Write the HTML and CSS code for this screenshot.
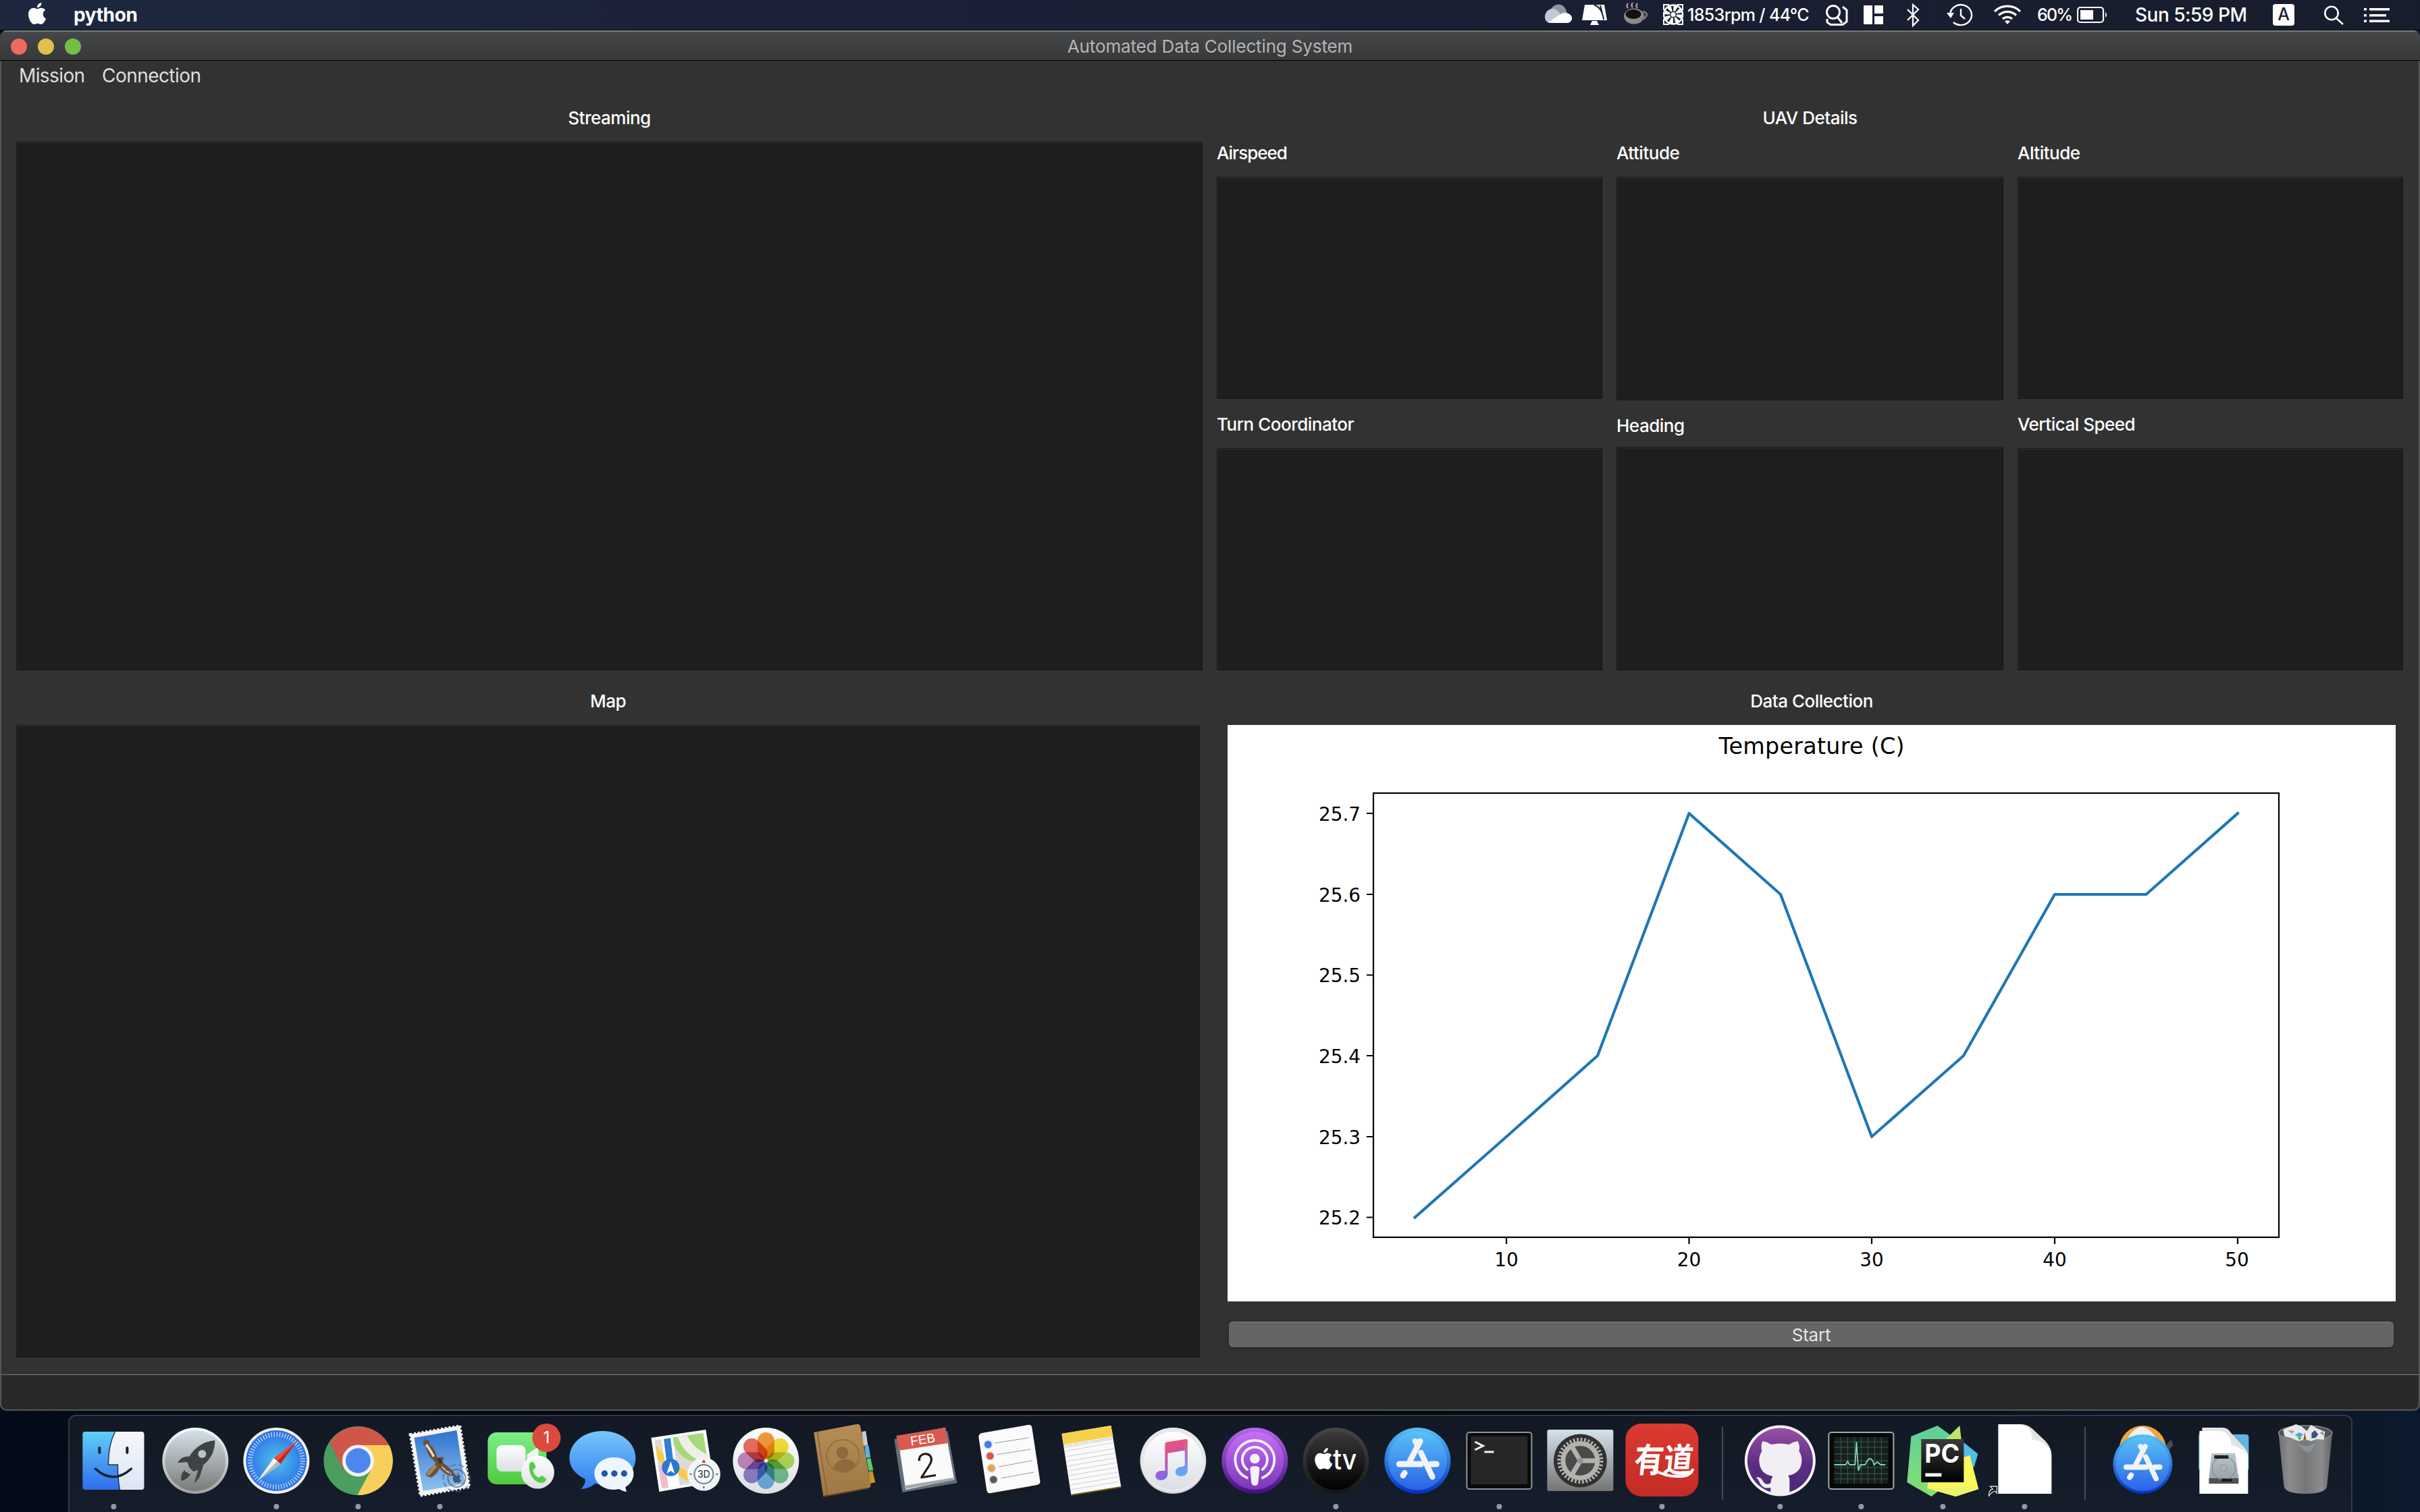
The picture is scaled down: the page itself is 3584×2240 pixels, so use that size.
FILE: index.html
```html
<!DOCTYPE html>
<html lang="en">
<head>
<meta charset="utf-8">
<title>Automated Data Collecting System</title>
<link rel="stylesheet" href="styles.css">
</head>
<body>
<svg class="defs" width="0" height="0" aria-hidden="true">
  <defs>
    <path id="apple" d="M12.152 6.896c-.948 0-2.415-1.078-3.96-1.04-2.04.027-3.91 1.183-4.961 3.014-2.117 3.675-.546 9.103 1.519 12.09 1.013 1.454 2.208 3.09 3.792 3.039 1.52-.065 2.09-.987 3.935-.987 1.831 0 2.35.987 3.96.948 1.637-.026 2.676-1.48 3.676-2.948 1.156-1.688 1.636-3.325 1.662-3.415-.039-.013-3.182-1.221-3.22-4.857-.026-3.04 2.48-4.494 2.597-4.559-1.429-2.09-3.623-2.324-4.39-2.376-2-.156-3.675 1.09-4.61 1.09zM15.53 3.83c.843-1.012 1.4-2.427 1.245-3.83-1.207.052-2.662.805-3.532 1.818-.78.896-1.454 2.338-1.273 3.714 1.338.104 2.715-.688 3.559-1.701"/>
    <linearGradient id="gFinder" x2="0" y2="1"><stop stop-color="#5fd0f8"/><stop offset="1" stop-color="#2f6cec"/></linearGradient>
    <linearGradient id="gFace" x2="0" y2="1"><stop stop-color="#f6f6f8"/><stop offset="1" stop-color="#dce6f4"/></linearGradient>
    <linearGradient id="gLaunch" x2="0" y2="1"><stop stop-color="#d3e1e7"/><stop offset="1" stop-color="#7b7a79"/></linearGradient>
    <linearGradient id="gRing" x2="0" y2="1"><stop stop-color="#f2fbff"/><stop offset="1" stop-color="#a2a2a2"/></linearGradient>
    <radialGradient id="gSafari"><stop stop-color="#52c2ea"/><stop offset="1" stop-color="#2a6fe6"/></radialGradient>
    <linearGradient id="gSky" x2="0" y2="1"><stop stop-color="#2f73cf"/><stop offset="1" stop-color="#8fc2ee"/></linearGradient>
    <linearGradient id="gGreen" x2="0" y2="1"><stop stop-color="#7cee8a"/><stop offset="1" stop-color="#4fcb3a"/></linearGradient>
    <linearGradient id="gMsg" x2="0" y2="1"><stop stop-color="#77c6f8"/><stop offset="1" stop-color="#2f7df4"/></linearGradient>
    <linearGradient id="gWhite" x2="0" y2="1"><stop stop-color="#ffffff"/><stop offset="1" stop-color="#dcdfe2"/></linearGradient>
    <linearGradient id="gBook" x2="0" y2="1"><stop stop-color="#b68d55"/><stop offset="1" stop-color="#9f7744"/></linearGradient>
    <linearGradient id="gNote" x1="0" y1="0" x2="0.3" y2="1"><stop stop-color="#f35d68"/><stop offset=".35" stop-color="#e0508c"/><stop offset="1" stop-color="#7a6bf2"/></linearGradient>
    <linearGradient id="gNote2" x2="0" y2="1"><stop stop-color="#ee5f6c"/><stop offset=".5" stop-color="#9a7ce0"/><stop offset="1" stop-color="#55b2f6"/></linearGradient>
    <linearGradient id="gPod" x2="0" y2="1"><stop stop-color="#c571f6"/><stop offset="1" stop-color="#7c35ba"/></linearGradient>
    <linearGradient id="gPodR" x2="0" y2="1"><stop stop-color="#b468ea"/><stop offset="1" stop-color="#431080"/></linearGradient>
    <linearGradient id="gTv" x2="0" y2="1"><stop stop-color="#3a3a3a"/><stop offset="1" stop-color="#000"/></linearGradient>
    <linearGradient id="gTvR" x2="0" y2="1"><stop stop-color="#464646"/><stop offset="1" stop-color="#161616"/></linearGradient>
    <linearGradient id="gStore" x2="0" y2="1"><stop stop-color="#58c2f8"/><stop offset="1" stop-color="#2a62e6"/></linearGradient>
    <linearGradient id="gStoreR" x2="0" y2="1"><stop stop-color="#58c0f6"/><stop offset="1" stop-color="#0432c0"/></linearGradient>
    <linearGradient id="gPref" x2="0" y2="1"><stop stop-color="#d4e2ec"/><stop offset="1" stop-color="#767472"/></linearGradient>
    <linearGradient id="gYd" x2="0" y2="1"><stop stop-color="#dc3a32"/><stop offset="1" stop-color="#c22c24"/></linearGradient>
    <linearGradient id="gGit" x2="0" y2="1"><stop stop-color="#9a50a8"/><stop offset=".55" stop-color="#5b2d83"/><stop offset="1" stop-color="#4a2a78"/></linearGradient>
    <linearGradient id="gPyG" x2="0" y2="1"><stop stop-color="#5ccf9a"/><stop offset="1" stop-color="#86e070"/></linearGradient>
    <linearGradient id="gDark" x2="0" y2="1"><stop stop-color="#3a3a3a"/><stop offset="1" stop-color="#000"/></linearGradient>
    <linearGradient id="gFold" x1="0" y1="1" x2="1" y2="0"><stop stop-color="#fff"/><stop offset="1" stop-color="#c9c9c9"/></linearGradient>
    <linearGradient id="gTrash" x2="1" y2="0"><stop stop-color="#6e7072"/><stop offset=".2" stop-color="#8b8d8f"/><stop offset=".5" stop-color="#747678"/><stop offset=".8" stop-color="#8a8c8e"/><stop offset="1" stop-color="#606264"/></linearGradient>
    <linearGradient id="gHdd" x2="0" y2="1"><stop stop-color="#b9c6cc"/><stop offset="1" stop-color="#9aa5aa"/></linearGradient>
    <g id="storeA" stroke-linecap="round" fill="none" stroke="#f1f3f7">
      <path stroke-width="9" d="M33 75H65"/><path stroke-width="9" d="M80 75H88"/>
      <path stroke-width="8.5" d="M64 41L47 74"/><path stroke-width="8.5" d="M56.500 41L59.500 46"/><path stroke-width="8.500" d="M65 58L82 94"/>
      <path stroke-width="8.500" d="M41 88L38.500 92"/>
    </g>
  </defs>
</svg>

<header class="menubar">
  <svg class="apple" viewBox="0 0 24 24"><use href="#apple"/></svg>
  <span class="app-name">python</span>
  <div class="status">
    <svg width="55" height="45" viewBox="2288 0 55 45"><path d="M2296 20a12 12 0 0 1 23-6l3 8-10 8z" fill="#8f94a8"/><path d="M2288 25c0-7 5-12 11-12 7 0 10 5 12 9l-15 12c-5 0-8-4-8-9z" fill="#c3c7d6"/><path d="M2293 33l18-12c9-5 17 1 17 6 0 4-3 7-7 7h-24z" fill="#fff"/></svg>
    <svg width="60" height="45" viewBox="2343 0 60 45"><path d="M2347 7h29l4 23h-37z" fill="#fff"/><path d="M2358 31h7l3 6h-13z" fill="#fff"/><path d="M2361 7c7 3 12 8 14 22M2370 8l3 12" stroke="#1b2032" stroke-width="2" fill="none"/></svg>
    <svg width="60" height="45" viewBox="2403 0 60 45"><ellipse cx="2420" cy="24" rx="15" ry="11.500" fill="#8b8b88"/><ellipse cx="2419" cy="21" rx="11.500" ry="7" fill="#16110e"/><path d="M2433 17q8 2 5 7t-8 4" stroke="#77777a" stroke-width="3" fill="none"/><path d="M2411 12q-3-3 0-7M2418 11q-3-3 0-7M2425 12q-3-3 0-7" stroke="#96969a" stroke-width="2.500" fill="none"/></svg>
    <svg width="36" height="45" viewBox="2463 0 36 45"><path d="M2464 15V7h8M2484 7h8v8M2492 28v8h-8M2472 36h-8v-8" fill="none" stroke="#fff" stroke-width="2"/><circle cx="2478" cy="21.500" r="14" fill="none" stroke="#fff" stroke-width="2.500"/><circle cx="2478" cy="21.500" r="9" fill="none" stroke="#fff" stroke-width="8" stroke-dasharray="4.500 2.570"/><circle cx="2478" cy="21.500" r="3.500" fill="#fff"/></svg>
    <span class="st-text st-rpm">1853rpm / 44°C</span>
    <svg width="57" height="45" viewBox="2703 0 57 45" fill="none" stroke="#fff" stroke-width="3"><circle cx="2715" cy="18" r="9.500"/><path d="M2721 25l7 9M2706 28v5l5 3.500h18l6-4.500V15l-6-5"/></svg>
    <svg width="64" height="45" viewBox="2760 0 64 45" fill="#fff"><path d="M2760 8h13v28h-13zM2776 8h13v12h-13zM2776 24h13v12h-13z"/></svg>
    <svg width="59" height="45" viewBox="2824 0 59 45" fill="none" stroke="#fff" stroke-width="2.300"><path d="M2825 14l16 16-8 8V7l8 7-16 16"/></svg>
    <svg width="69" height="45" viewBox="2883 0 69 45" fill="none" stroke="#fff" stroke-width="2.400"><path d="M2888 22a16 15 0 1 1 5 11"/><path d="M2904 13v10l6 5"/><path d="M2883 19h11l-5 8z" fill="#fff" stroke="none"/></svg>
    <svg width="65" height="45" viewBox="2952 0 65 45" fill="none" stroke="#fff" stroke-width="3.200"><path d="M2954 17a27 27 0 0 1 38 0M2960 22.500a19 19 0 0 1 26 0M2966 28a10.500 10.500 0 0 1 14 0"/><path d="M2969 31.500q4-3 8 0l-4 4.500z" fill="#fff" stroke="none"/></svg>
    <span class="st-text st-bat">60%</span>
    <svg width="86" height="45" viewBox="3076 0 86 45"><rect x="3077" y="11" width="38" height="22" rx="4" fill="none" stroke="#fff" stroke-width="2.200"/><rect x="3081" y="15" width="19" height="14" fill="#fff"/><path d="M3118 18q4 4 0 8z" fill="#fff"/></svg>
    <span class="st-text st-date">Sun 5:59 PM</span>
    <svg width="76" height="45" viewBox="3366 0 76 45"><rect x="3366" y="6" width="32" height="32" rx="4" fill="#fff"/><text x="3382" y="30" text-anchor="middle" class="ime">A</text></svg>
    <svg width="59" height="45" viewBox="3442 0 59 45" fill="none" stroke="#fff" stroke-width="2.600"><circle cx="3453" cy="19.500" r="9.700"/><path d="M3460 27l10 9"/></svg>
    <svg width="83" height="45" viewBox="3501 0 83 45" fill="#fff"><path d="M3501 12h4v3.500h-4zM3501 21h4v3.500h-4zM3501 29.500h4v3.500h-4zM3509 12h30v3.500h-30zM3509 21h25v3.500h-25zM3509 29.500h30v3.500h-30z"/></svg>
  </div>
</header>

<main class="window">
  <div class="titlebar">
    <div class="lights"><i class="light close"></i><i class="light min"></i><i class="light max"></i></div>
    <h1 class="title">Automated Data Collecting System</h1>
  </div>
  <nav class="menus"><span class="menu-mission">Mission</span><span class="menu-conn">Connection</span></nav>

  <div class="content">
    <div class="row row-top">
      <section class="pane streaming">
        <h2 class="heading">Streaming</h2>
        <div class="view"></div>
      </section>
      <section class="pane uav">
        <h2 class="heading">UAV Details</h2>
        <div class="gauges">
          <div class="gauge-col">
            <h3 class="label tight">Airspeed</h3><div class="view"></div>
            <h3 class="label">Turn Coordinator</h3><div class="view"></div>
          </div>
          <div class="gauge-col mid">
            <h3 class="label">Attitude</h3><div class="view"></div>
            <h3 class="label">Heading</h3><div class="view"></div>
          </div>
          <div class="gauge-col">
            <h3 class="label">Altitude</h3><div class="view"></div>
            <h3 class="label">Vertical Speed</h3><div class="view"></div>
          </div>
        </div>
      </section>
    </div>
    <div class="row row-bottom">
      <section class="pane map">
        <h2 class="heading">Map</h2>
        <div class="view"></div>
      </section>
      <section class="pane data">
        <h2 class="heading">Data Collection</h2>
        <svg class="chart" width="1730" height="854" viewBox="1818 1074 1730 854">
          <rect x="1818" y="1074" width="1730" height="854" fill="#fff"/>
          <text x="2683" y="1117" text-anchor="middle" class="chart-title" textLength="275">Temperature (C)</text>
          <rect x="2034" y="1175" width="1341" height="658" fill="none" stroke="#000" stroke-width="2.200"/>
          <path d="M2024 1205h10M2024 1325h10M2024 1444.500h10M2024 1564h10M2024 1684h10M2024 1803.500h10M2231 1833v10M2501.500 1833v10M2772 1833v10M3043 1833v10M3314 1833v10" stroke="#000" stroke-width="2.200"/>
          <g class="tick" text-anchor="end">
            <text x="2015" y="1216">25.7</text><text x="2015" y="1336">25.6</text><text x="2015" y="1455">25.5</text>
            <text x="2015" y="1575">25.4</text><text x="2015" y="1695">25.3</text><text x="2015" y="1814">25.2</text>
          </g>
          <g class="tick" text-anchor="middle">
            <text x="2231" y="1876">10</text><text x="2501.500" y="1876">20</text><text x="2772" y="1876">30</text><text x="3043" y="1876">40</text><text x="3313" y="1876">50</text>
          </g>
          <polyline points="2095.500,1803.500 2231,1684 2366,1564 2501.500,1205 2637,1325 2772,1684 2908,1564 3043,1325 3178.500,1325 3314,1205" fill="none" stroke="#1f77b4" stroke-width="4.200" stroke-linejoin="round" stroke-linecap="square"/>
        </svg>
        <button class="start" type="button">Start</button>
      </section>
    </div>
  </div>
  <footer class="statusbar"></footer>
</main>

<div class="dock">
  <svg class="app" viewBox="0 0 120 144">
    <rect x="14" y="25" width="91" height="86" rx="4" fill="url(#gFinder)"/>
    <path d="M62 25h39q4 0 4 4v78q0 4-4 4H69q-3-16-3-37H52q0-30 10-49z" fill="url(#gFace)"/>
    <path d="M62 25q-10 20-10 49h14q0 20 3 37" fill="none" stroke="#1b3350" stroke-width="1.500"/>
    <path d="M39 49v7M80 49v7" stroke="#15202c" stroke-width="4" stroke-linecap="round"/>
    <path d="M33 80q26 24 53 0" fill="none" stroke="#15202c" stroke-width="3.500" stroke-linecap="round"/>
    <circle cx="60" cy="136" r="4" class="dot"/>
  </svg>
  <svg class="app" viewBox="0 0 120 144">
    <circle cx="60" cy="68" r="49" fill="url(#gRing)"/><circle cx="60" cy="68" r="45" fill="url(#gLaunch)"/>
    <path d="M89 38C73 39 59 48 51 62c-8-1-14 3-17 9l14-1 3 8 6 6q3-1 7-2l-6 20 8-9 6-19c12-9 17-22 17-36zM45 82c-5 2-7 10-6 16 7-2 12-6 14-11l-3 1-2-3-3 0z" fill="#404345"/><circle cx="70" cy="58" r="6" fill="#b8c3c8"/>
  </svg>
  <svg class="app" viewBox="0 0 120 144">
    <circle cx="60" cy="68" r="49" fill="#f0f0f2"/><circle cx="60" cy="68" r="45" fill="url(#gSafari)"/>
    <circle cx="60" cy="68" r="39" fill="none" stroke="#e4f0fa" stroke-width="7" stroke-dasharray="1.300 2.784" opacity=".85"/>
    <path d="M91 38L56 64l10 9z" fill="#ee4b42"/><path d="M91 38L61 69l5 4z" fill="#c02820"/><path d="M32 98l24-34 10 9z" fill="#f4f4f4"/><path d="M32 98l29-29 5 4z" fill="#b8b8b8"/>
    <circle cx="60" cy="136" r="4" class="dot"/>
  </svg>
  <svg class="app" viewBox="0 0 120 144">
    <circle cx="60" cy="68" r="51" fill="#4b9e5f"/>
    <path d="M60 68L18 41A51 51 0 0 1 106 45z" fill="#d0564a"/><path d="M60 45h46A51 51 0 0 1 59 119L80 80z" fill="#f9cf5c"/><path d="M18 41l20 40 22-20z" fill="#d0564a"/>
    <circle cx="60" cy="68" r="23.500" fill="#f2f3f4"/><circle cx="60" cy="68" r="18.500" fill="#4c87ee"/>
    <circle cx="60" cy="136" r="4" class="dot"/>
  </svg>
  <svg class="app" viewBox="0 0 120 144">
    <path d="M16 29L90 16l14 91-73 13z" fill="#f5f5f5"/><path d="M16 29L90 16l14 91-73 13z" fill="none" stroke="#f5f5f5" stroke-width="3.500" stroke-dasharray="3 2.800"/>
    <path d="M22 34l63-11 12 79-62 11z" fill="url(#gSky)"/>
    <path d="M37 32l2 6 4-1 2 7c7 5 9 12 11 19l3 1 4-2 3 2-2 5 3 4c4 2 8 6 12 10l6 9-9-2c-6-1-12-5-16-11l-5 8-6 5c-4 2-8-1-10-4l6-8 9-8-4-5c-6-6-10-12-10-20l-4-2-1-7 2 2z" fill="#6c4f38"/>
    <path d="M40 44c4 6 8 11 11 18" stroke="#e8dcc8" stroke-width="3.500" fill="none"/><path d="M63 77q6 7 14 10" stroke="#c9b296" stroke-width="2.500" fill="none"/><path d="M54 75l-12 14" stroke="#b08358" stroke-width="5"/><path d="M58 64l4 8" stroke="#4a3424" stroke-width="5"/>
    <g fill="none" stroke="#4b5f80" opacity=".7"><circle cx="85" cy="94" r="13" stroke-width="2"/><circle cx="85" cy="94" r="20" stroke-width="1.500" stroke-dasharray="9 3"/></g><use href="#apple" transform="translate(78 86) scale(.62)" fill="#3e5678"/>
    <circle cx="60" cy="136" r="4" class="dot"/>
  </svg>
  <svg class="app" viewBox="0 0 120 144">
    <rect x="11" y="26" width="87" height="77" rx="13" fill="url(#gGreen)"/><rect x="24" y="45" width="43" height="39" rx="8" fill="url(#gWhite)"/><path d="M69 59l17-12v35l-17-12z" fill="#f0f2f0"/>
    <circle cx="85" cy="85" r="24.500" fill="url(#gWhite)"/><path d="M73 72c3-4 6-3 8 2l1 4-4 4c1 6 5 10 9 11l4-3 6 4c2 3-2 7-7 7-11-1-20-15-17-29z" fill="#58cc4a"/>
    <circle cx="98" cy="34" r="21" fill="#dc4a3d"/><text x="98" y="42" text-anchor="middle" class="badge">1</text>
  </svg>
  <svg class="app" viewBox="0 0 120 144">
    <path d="M60 24c27 0 49 17 49 40s-22 39-49 39q-6 0-11-1-10 8-21 8 8-8 6-15C19 88 11 77 11 64c0-23 22-40 49-40z" fill="url(#gMsg)"/>
    <path d="M77 63c17 0 29 11 29 24 0 9-5 16-12 20q0 4 2 7-7-1-11-4l-8 1c-17 0-29-11-29-24s12-24 29-24z" fill="#edf5fd"/>
    <g fill="#2458a0"><circle cx="63" cy="87" r="4.700"/><circle cx="77.500" cy="87" r="4.700"/><circle cx="92" cy="87" r="4.700"/></g>
  </svg>
  <svg class="app" viewBox="0 0 120 144">
    <path d="M11 34L92 22l12 78-81 14z" fill="#fafafa"/><clipPath id="mapc"><path d="M16 38l72-11 11 70-72 12z"/></clipPath>
    <g clip-path="url(#mapc)"><path d="M10 20h100v100H10z" fill="#dcdad2"/><path d="M40 20h60v60L70 68Q50 62 40 34z" fill="#a5d97d"/><path d="M55 24q8 34 50 46" fill="none" stroke="#efefe8" stroke-width="14"/><path d="M12 80l22-10 4 40H20z" fill="#f0bccb"/><path d="M14 50q20 26 60 46" stroke="#f6cb4c" stroke-width="12" fill="none"/><path d="M34 30l12 82" stroke="#fff" stroke-width="17"/><path d="M34 30l5 40" stroke="#2f7fd6" stroke-width="10"/></g>
    <circle cx="40" cy="78" r="13" fill="#2a78d4"/><path d="M40 69l6 18-6-4-6 4z" fill="#fff"/>
    <circle cx="89" cy="88" r="24.500" fill="#f3f4f4"/><circle cx="89" cy="88" r="14" fill="#fff" stroke="#58849c" stroke-width="2"/><text x="89" y="93" text-anchor="middle" class="three-d">3D</text><path d="M89 66l3 5h-6z" fill="#d8382c"/><path d="M68 88h3M107 88h3M89 106v3" stroke="#333" stroke-width="1.600"/>
  </svg>
  <svg class="app photos" viewBox="0 0 120 144">
    <circle cx="60" cy="68" r="49" fill="url(#gWhite)"/>
    <g class="petals">
      <rect x="47.500" y="26" width="25" height="40" rx="12.500" fill="#f19a3a"/>
      <rect x="47.500" y="26" width="25" height="40" rx="12.500" fill="#f5df3a" transform="rotate(45 60 68)"/>
      <rect x="47.500" y="26" width="25" height="40" rx="12.500" fill="#b9dc5a" transform="rotate(90 60 68)"/>
      <rect x="47.500" y="26" width="25" height="40" rx="12.500" fill="#7ac596" transform="rotate(135 60 68)"/>
      <rect x="47.500" y="26" width="25" height="40" rx="12.500" fill="#74b5e8" transform="rotate(180 60 68)"/>
      <rect x="47.500" y="26" width="25" height="40" rx="12.500" fill="#9484cf" transform="rotate(225 60 68)"/>
      <rect x="47.500" y="26" width="25" height="40" rx="12.500" fill="#c48bc0" transform="rotate(270 60 68)"/>
      <rect x="47.500" y="26" width="25" height="40" rx="12.500" fill="#ee6d5c" transform="rotate(315 60 68)"/>
    </g>
    <circle cx="60" cy="68" r="2.500" fill="#fff"/>
  </svg>
  <svg class="app" viewBox="0 0 120 144">
    <path d="M82 25l6-1 3 21-7 1z" fill="#c9ccd2"/><path d="M86 46l6-1 3 18-7 1z" fill="#5ab5e0"/><path d="M89 65l6-1 4 18-7 1z" fill="#5bc76c"/><path d="M92 84l6-1 4 17-8 2z" fill="#c9902c"/>
    <path d="M11 26l63-12q5-1 6 4l15 85q1 5-4 6l-66 12z" fill="url(#gBook)"/><path d="M16 25l15 94" stroke="#876236" stroke-width="1.500"/>
    <g transform="rotate(-9 54 61)"><circle cx="54" cy="61" r="24" fill="none" stroke="#8e6a3c" stroke-width="1.500"/><circle cx="54" cy="56" r="9" fill="#8e6a3c"/><path d="M37 77q5-11 17-11t17 11q-16 14-34 0z" fill="#8e6a3c"/></g>
    <path d="M25 121l66-12" stroke="#5c4221" stroke-width="2"/>
  </svg>
  <svg class="app" viewBox="0 0 120 144">
    <path d="M9 36l79-12 14 77-81 14z" fill="#60707a"/><path d="M14 32l70-13 14 77-72 15z" fill="#fafafa"/><path d="M24 105l73-12v4l-72 13z" fill="#a5a7a9"/><path d="M12 31l73-12 3 23-72 11z" fill="#d85a50"/>
    <text x="51" y="43" text-anchor="middle" transform="rotate(-9 51 36)" class="cal-m">FEB</text><text x="57" y="93" text-anchor="middle" transform="rotate(-9 57 76)" class="cal-d">2</text>
  </svg>
  <svg class="app" viewBox="0 0 120 144">
    <path d="M18 29l68-12q5-1 6 4l12 79q1 5-5 7l-68 11q-5 1-6-4L13 35q0-5 5-6z" fill="#17191c" transform="translate(0 2)"/><path d="M18 27l68-12q5-1 6 4l12 79q1 5-5 6l-68 12q-5 1-6-4L13 33q0-5 5-6z" fill="#fbfbfb"/>
    <g stroke="#9a9a9a" stroke-width="1"><path d="M37 42l50-8M40 59l50-8M43 77l49-9M46 94l49-9"/></g>
    <g stroke="#d8d8d8" stroke-width="1.500"><circle cx="27" cy="44" r="6" fill="#3f7cf0"/><circle cx="30" cy="61" r="6" fill="#dd5347"/><circle cx="32" cy="79" r="6" fill="#e9a348"/><circle cx="35" cy="96" r="6" fill="#555b64"/></g>
  </svg>
  <svg class="app" viewBox="0 0 120 144">
    <path d="M16 28l73-12 15 91-74 12z" fill="#fafafa"/><path d="M16 28l73-12 3 16-73 12z" fill="#f7d04c"/>
    <path d="M19 49l73-13M20 54l73-13M22 62l72-12M23 69l72-12M24 76l72-12M26 83l71-12M27 90l71-12M28 97l71-12M29 104l71-12M30 111l71-12" stroke="#cfcfcf" stroke-width="1.200"/><path d="M19 46l73-12" stroke="#8a8a80" stroke-width="1.200" stroke-dasharray="1.500 2"/><path d="M30 119l74-12" stroke="#6d5612" stroke-width="2"/>
  </svg>
  <svg class="app" viewBox="0 0 120 144">
    <circle cx="60" cy="68" r="49" fill="#c6c9ce"/><circle cx="60" cy="67" r="48" fill="#f4f5f6" opacity=".7"/><circle cx="60" cy="68" r="43" fill="url(#gWhite)"/>
    <path d="M48 43q0-2 2-2.500L79 36q2 0 2 1.500V52l-29 5V88c0 5-5 9-10 9s-8-3-8-7 4-7 8-7h6z" fill="url(#gNote)"/><path d="M77 37h4.500V82c0 5-4 9-9 9s-9-2-9-6c0-5 5-8 9-8q5 0 5-4z" fill="url(#gNote2)"/>
  </svg>
  <svg class="app" viewBox="0 0 120 144">
    <circle cx="60" cy="68" r="49" fill="url(#gPodR)"/><circle cx="60" cy="68" r="43" fill="url(#gPod)"/>
    <g fill="none" stroke="#f4f0f8" stroke-width="3.800"><path d="M50 94A29 29 0 1 1 70 94"/><path d="M50 82A18.500 18.500 0 1 1 70 82"/></g><circle cx="60" cy="65" r="7.300" fill="#f6f3f8"/><path d="M53 80q0-4 7-4t7 4l-2 21q-1 4-5 4t-5-4z" fill="#f6f3f8"/>
  </svg>
  <svg class="app" viewBox="0 0 120 144">
    <circle cx="60" cy="68" r="49" fill="url(#gTvR)"/><circle cx="60" cy="68" r="43.500" fill="url(#gTv)"/><use href="#apple" transform="translate(26 49) scale(1.330)" fill="#fff"/><text x="56" y="81" class="tv" textLength="35" lengthAdjust="spacingAndGlyphs">tv</text>
    <circle cx="60" cy="136" r="4" class="dot"/>
  </svg>
  <svg class="app" viewBox="0 0 120 144">
    <circle cx="60" cy="68" r="49" fill="url(#gStoreR)"/><circle cx="60" cy="68" r="43.500" fill="url(#gStore)"/><use href="#storeA" transform="translate(0 -2)"/>
  </svg>
  <svg class="app" viewBox="0 0 120 144">
    <rect x="12" y="26" width="96" height="84" rx="4" fill="#0a0a0a" stroke="#8d9499" stroke-width="2"/><rect x="18" y="32" width="84" height="71" fill="#262728"/><path d="M24 40l12 6-12 6M38 55h14" fill="none" stroke="#f4f4f4" stroke-width="3"/>
    <circle cx="60" cy="136" r="4" class="dot"/>
  </svg>
  <svg class="app" viewBox="0 0 120 144">
    <rect x="11" y="22" width="98" height="91" rx="3" fill="url(#gPref)"/><circle cx="60" cy="68" r="39.500" fill="#303133"/><circle cx="60" cy="68" r="31.500" fill="none" stroke="#b4b2ac" stroke-width="5" stroke-dasharray="2.800 2.700"/><circle cx="60" cy="68" r="25.500" fill="#4a4a4a" stroke="#b4b2ac" stroke-width="7"/><path d="M60 68L47 46M60 68h26M60 68L47 90" stroke="#b4b2ac" stroke-width="7"/><circle cx="60" cy="68" r="4" fill="#8c929c"/>
  </svg>
  <svg class="app" viewBox="0 0 120 144">
    <rect x="6" y="13" width="108" height="108" rx="24" fill="url(#gYd)"/><text transform="translate(61 85) skewX(-6) scale(.87 1)" text-anchor="middle" class="youdao">有道</text><path d="M47 81q20 12 44 10 12-1 15-11" fill="none" stroke="#fff" stroke-width="4"/>
    <circle cx="60" cy="136" r="4" class="dot"/>
  </svg>
  <i class="divider"></i>
  <svg class="app" viewBox="0 0 120 144">
    <circle cx="60" cy="68" r="52.500" fill="#f6f4f8"/><circle cx="60" cy="68" r="48.500" fill="url(#gGit)"/>
    <path d="M34 39q7 1 13 5 13-3 26 0 6-4 13-5 4 7 2 15 4 6 4 13c0 14-8 21-20 23q2 3 2 8v18q-14 6-28 1v-9c-8 2-13-1-16-7-2-5-4-7-6-8 6-2 9 2 11 6 3 5 8 4 11 2q0-5 3-10c-12-2-20-9-20-24q0-7 4-13-2-8 1-15z" fill="#f1eff3"/>
    <circle cx="60" cy="136" r="4" class="dot"/>
  </svg>
  <svg class="app" viewBox="0 0 120 144">
    <rect x="12" y="26" width="96" height="84" rx="4" fill="#080808" stroke="#a0a8ac" stroke-width="2"/><rect x="20" y="33" width="80" height="69" fill="#15201d"/><path d="M30 33v69M40 33v69M50 33v69M60 33v69M70 33v69M80 33v69M90 33v69M20 40h80M20 48h80M20 58h80M20 68h80M20 78h80M20 87h80M20 95h80" stroke="#3c5a53" stroke-width="1"/>
    <path d="M20 74h17l3-5 3 5h8l2-34 3 43 3-9h7c5-12 10-12 13 0l5-4 5 4h7" fill="none" stroke="#7fd0b8" stroke-width="1.800"/>
    <circle cx="60" cy="136" r="4" class="dot"/>
  </svg>
  <svg class="app" viewBox="0 0 120 144">
    <path d="M52 16l22 16 32 40-63 49-36-21 6-68z" fill="url(#gPyG)"/><path d="M85 16l3 26-34 4z" fill="#b9e86a"/><path d="M91 41l21 17-6 20-20-6z" fill="#4fbde8"/><path d="M100 60l13 50-34 11-42-12 4-30z" fill="#fcf75a"/><path d="M37 109l42 12 34-11-10-4z" fill="#eef46a"/>
    <rect x="28" y="36" width="63" height="64" fill="url(#gDark)"/><text x="33" y="71" class="pc" textLength="52" lengthAdjust="spacingAndGlyphs">PC</text><path d="M34 89h24" stroke="#fff" stroke-width="5"/>
    <circle cx="60" cy="136" r="4" class="dot"/>
  </svg>
  <svg class="app" viewBox="0 0 120 144">
    <path d="M21 14h34q8 0 16 10l20 17q9 8 9 19v57H21z" fill="#fff"/><path d="M55 14q16 3 16 23 15 0 27 14-1-5-7-12L72 21q-8-7-17-7z" fill="url(#gFold)"/>
    <path d="M7 121q0-10 6-11l-4-4h10v10l-3-3q-6 2-9 8z" fill="#111" stroke="#ddd" stroke-width="1.300"/>
    <circle cx="60" cy="136" r="4" class="dot"/>
  </svg>
  <i class="divider"></i>
  <svg class="app" viewBox="0 0 120 144">
    <ellipse cx="60" cy="52" rx="35" ry="36" fill="#f0a63a"/><path d="M38 34q20-32 42 0z" fill="#f1f1ef"/><path d="M94 45l8-8 3 8-7 8z" fill="#4a4a5a"/>
    <circle cx="60" cy="73" r="44" fill="url(#gStoreR)"/><circle cx="60" cy="73" r="40" fill="url(#gStore)"/><use href="#storeA" transform="translate(6 10) scale(.9)"/>
  </svg>
  <svg class="app" viewBox="0 0 120 144">
    <path d="M23 29h70q4 0 4 4v48H23z" fill="#62b3de"/><path d="M28 19h30q8 0 12 7l20 22v40H28z" fill="#e4e4e4"/><path d="M24 24h33q8 0 14 8l16 13q9 8 9 17v55H24z" fill="#fff"/><path d="M57 24q14 4 14 22 13 0 23 12-1-6-7-13L72 31q-7-7-15-7z" fill="url(#gFold)"/>
    <path d="M42 57h35l5 37H38z" fill="url(#gHdd)"/><path d="M38 94h44v8H38z" fill="#4d5254"/><circle cx="60" cy="79" r="17" fill="none" stroke="#83919a" stroke-width="1.300"/><circle cx="60" cy="79" r="5" fill="#a9b5ba" stroke="#83919a"/><path d="M46 60h21v5H46z" fill="#222"/><path d="M57 95h15v4H57z" fill="#181a1b"/>
  </svg>
  <svg class="app" viewBox="0 0 120 144">
    <path d="M20 25q40 16 80 0l-8 80q-1 12-32 12t-32-12z" fill="url(#gTrash)"/><ellipse cx="60" cy="27" rx="39.500" ry="11" fill="#505356" stroke="#8b8e90" stroke-width="1.500"/>
    <path d="M27 22l9-4 10-4 8 3 8 7 6-9 9 5 12 5-2 12-10-1-9 3-9-3-9 3-10-4-11-3z" fill="#e8e8ea"/><path d="M44 30l7-4 6 3-5 5z" fill="#4aa8e0"/><path d="M48 33l6 1-3 4z" fill="#58b040"/><path d="M69 27l5-4 5 6-4 5-6 1z" fill="#3c4f86"/><path d="M59 26l2 10-4 1z" fill="#a45136"/><path d="M34 23l10 1-4 4zM81 27l5-3 2 7z" fill="#9b9b9e"/>
    <path d="M46 42q16 8 28 0-4 14-12 14z" fill="#9da0a2" opacity=".6"/>
  </svg>
</div>
</body>
</html>
```
FILE: styles.css
```css
* { box-sizing: border-box; }

body {
  margin: 0;
  width: 3584px;
  height: 2240px;
  overflow: hidden;
  display: flex;
  flex-direction: column;
  font-family: Inter, "Liberation Sans", sans-serif;
  color: #fff;
  background: linear-gradient(90deg, #040b1a 0%, #02060c 50%, #0b1a2c 100%);
}

.defs { display: block; height: 0; flex: none; }

/* system menu bar */
.menubar {
  height: 45px;
  flex: none;
  display: flex;
  align-items: center;
  padding-left: 39px;
  background: linear-gradient(90deg, #1d283e 0%, #1b2036 40%, #181d2d 100%);
  border-bottom: 1px solid #050810;
}
.apple { width: 32px; height: 32px; fill: #fff; margin-top: -5px; }
.app-name { margin-left: 38px; font-size: 28px; font-weight: 700; line-height: 45px; letter-spacing: -0.4px; }
.status { margin-left: auto; width: 1296px; height: 45px; display: flex; }
.status svg { flex: none; }
.st-text { flex: none; white-space: nowrap; line-height: 44px; font-weight: 500; }
.st-rpm { width: 204px; font-size: 25px; letter-spacing: -0.65px; }
.st-bat { width: 59px; font-size: 25px; letter-spacing: -1.8px; }
.st-date { width: 204px; font-size: 28px; letter-spacing: -0.5px; }
.ime { font: 500 25px Inter, sans-serif; fill: #1b2032; }

/* application window */
.window {
  height: 2045px;
  flex: none;
  display: flex;
  flex-direction: column;
  background: #323232;
  border-radius: 10px;
  overflow: hidden;
  box-shadow: inset 2px 0 #565656, inset -2px 0 #565656, inset 0 -2px #5a5a58;
}
.titlebar {
  height: 45px;
  flex: none;
  display: grid;
  grid-template-columns: 1fr auto 1fr;
  align-items: center;
  background: linear-gradient(#464749, #37383a);
  border-top: 2px solid #7a7c7c;
  border-bottom: 1px solid #000;
}
.lights { display: flex; gap: 16px; padding-left: 16px; }
.light { width: 24px; height: 24px; border-radius: 50%; }
.close { background: #ed6a5e; }
.min { background: #e0c04c; }
.max { background: #72be47; }
.title { margin: 0; font-size: 26px; font-weight: 400; line-height: 44px; color: #b4b5b6; letter-spacing: -0.14px; }
.menus {
  height: 44px;
  flex: none;
  display: flex;
  padding-left: 28px;
  font-size: 28px;
  line-height: 44px;
  color: #dfdfdf;
}
.menu-mission { width: 123px; letter-spacing: -0.6px; }
.menu-conn { letter-spacing: -0.55px; }

.content {
  height: 1902px;
  flex: none;
  padding: 5px 0 0 24px;
  display: flex;
  flex-direction: column;
  gap: 10px;
}
.row { display: flex; }
.row-top { height: 854px; gap: 21px; }
.row-bottom { height: 1008px; gap: 41px; }
.pane { display: flex; flex-direction: column; }
.streaming, .uav { width: 1757px; }
.map { width: 1753px; }
.data { width: 1730px; }
.heading {
  margin: 0;
  flex: none;
  height: 71px;
  line-height: 71px;
  text-align: center;
  font-size: 26px;
  font-weight: 500;
  letter-spacing: -0.5px;
}
.view {
  flex: 1;
  background: #1e1e1e;
  border: 1px solid #161616;
  box-shadow: inset 0 1px #333, inset 1px 0 #2a2a2a;
}
.gauges { flex: 1; display: grid; grid-template-columns: 571px 573px 571px; column-gap: 21px; }
.gauge-col { display: flex; flex-direction: column; }
.label {
  margin: 0 0 19px;
  flex: none;
  height: 33px;
  line-height: 33px;
  font-size: 26px;
  font-weight: 500;
  letter-spacing: -0.5px;
}
.label.tight { letter-spacing: -1px; }
.view + .label { margin-top: 21px; }
.mid .view + .label { margin-bottom: 15px; }

.chart { display: block; flex: none; }
.chart-title { font: 33.300px "DejaVu Sans", sans-serif; }
.tick { font: 27.800px "DejaVu Sans", sans-serif; }
.start {
  margin: 30px 3px 0 2px;
  height: 38px;
  flex: none;
  padding: 0;
  border: 0;
  border-top: 1px solid #858585;
  border-radius: 6px;
  background: #656565;
  box-shadow: 0 1px 2px #1c1c1c;
  color: #e6e6e6;
  font: 400 26px/36px Inter, sans-serif;
  letter-spacing: -0.2px;
}
.statusbar {
  flex: 1;
  background: #292929;
  border: solid #565656;
  border-width: 1px 2px 2px;
  border-top-color: #7c7c7c;
  border-radius: 0 0 10px 10px;
}

/* dock */
.dock {
  width: 3383px;
  height: 144px;
  flex: none;
  margin: 6px 0 0 101px;
  padding-left: 5px;
  display: flex;
  background: linear-gradient(#121924, #151d2b);
  border: 2px solid #333a45;
  border-bottom: 0;
  border-radius: 11px 11px 0 0;
}
.app { width: 120.700px; height: 144px; flex: none; margin-top: -2px; }
.dot { fill: #9399a8; }
.petals rect { mix-blend-mode: multiply; }
.photos { isolation: isolate; }
.divider { flex: none; width: 2px; height: 108px; margin: 16px 24px 0 28px; background: #454d5a; }
.badge { font: 400 24px Inter, sans-serif; fill: #fff; }
.three-d { font: 400 14px Inter, sans-serif; fill: #222; }
.cal-m { font: 400 19px "Liberation Sans", sans-serif; fill: #fff; }
.cal-d { font: 300 50px Inter, sans-serif; fill: #1c1c1c; }
.tv { font: 500 42px Inter, sans-serif; fill: #fff; }
.youdao { font: 700 50px "Noto Sans CJK SC", sans-serif; fill: #fff; }
.pc { font: 700 38px Inter, sans-serif; fill: #fff; }
```
